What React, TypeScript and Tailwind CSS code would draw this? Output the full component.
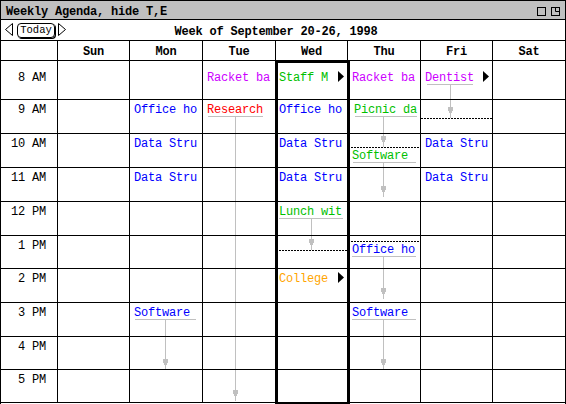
import React from 'react';

const BLUE = 'text-[#0000ff]';
const RED = 'text-[#ff0000]';
const GREEN = 'text-[#00c000]';
const PURPLE = 'text-[#cc00ff]';
const ORANGE = 'text-[#ffa500]';

const days = ['Sun', 'Mon', 'Tue', 'Wed', 'Thu', 'Fri', 'Sat'];
const hours = ['8 AM', '9 AM', '10 AM', '11 AM', '12 PM', '1 PM', '2 PM', '3 PM', '4 PM', '5 PM'];

// time column + seven days, last one has no right border
const cols = 'grid-cols-[57px_72px_73px_73px_72px_73px_72px_72px]';

const More = () => (
  <svg width="6" height="11" className="shrink-0">
    <polygon points="0,0 6,5.5 0,11" fill="#000" />
  </svg>
);

interface LabelProps {
  text: string;
  color: string;
  more?: boolean;
  indent?: string;
  className?: string;
}

const Label: React.FC<LabelProps> = ({ text, color, more, indent = 'pl-[4px]', className = '' }) => (
  <div className={`flex h-[13px] items-start justify-between pr-[3px] leading-[14px] whitespace-pre ${indent} ${className}`}>
    <span className={color}>{text}</span>
    {more && <More />}
  </div>
);

// grey underline with the duration line running down from it
const Span = ({ box, line }: { box: string; line: string }) => (
  <div className={`relative h-px bg-[#c0c0c0] ${box}`}>
    <div className={`absolute top-px -z-10 w-px bg-[#c0c0c0] ${line}`}>
      <svg width="5" height="8" className="absolute bottom-[3px] left-[-2px]" shapeRendering="crispEdges">
        <path d="M0 0h5v4h-1v2h-1v2h-1v-2h-1v-2h-1z" fill="#c0c0c0" />
      </svg>
    </div>
  </div>
);

const Dots = ({ className }: { className: string }) => (
  <div className={`h-px bg-[linear-gradient(90deg,#000_2px,transparent_2px)] bg-[length:3px_1px] ${className}`} />
);

const WED = 'pl-[3px]';

const cells: Record<string, React.ReactNode> = {
  '0-3': <Label text="Racket ba" color={PURPLE} />,
  '0-4': <Label text="Staff M" color={GREEN} indent={WED} more />,
  '0-5': <Label text="Racket ba" color={PURPLE} />,
  '0-6': (
    <>
      <Label text="Dentist" color={PURPLE} more />
      <Span box="ml-[6px] w-[46px]" line="left-[23px] h-[33px]" />
    </>
  ),
  '1-2': <Label text="Office ho" color={BLUE} />,
  '1-3': (
    <>
      <Label text="Research" color={RED} />
      <Span box="ml-[5px] w-[55px]" line="left-[27px] h-[284px]" />
    </>
  ),
  '1-4': <Label text="Office ho" color={BLUE} indent={WED} />,
  '1-5': (
    <>
      <Label text="Picnic da" color={GREEN} indent="pl-[6px]" />
      <Span box="ml-[7px] w-[62px]" line="left-[28px] h-[30px]" />
    </>
  ),
  '1-6': <Dots className="mt-[15px]" />,
  '2-2': <Label text="Data Stru" color={BLUE} />,
  '2-4': <Label text="Data Stru" color={BLUE} indent={WED} />,
  '2-5': (
    <>
      <Dots className="mt-[10px]" />
      <Label text="Software" color={GREEN} className="mt-[1px]" />
      <Span box="ml-[5px] w-[63px]" line="left-[30px] h-[34px]" />
    </>
  ),
  '2-6': <Label text="Data Stru" color={BLUE} />,
  '3-2': <Label text="Data Stru" color={BLUE} />,
  '3-4': <Label text="Data Stru" color={BLUE} indent={WED} />,
  '3-6': <Label text="Data Stru" color={BLUE} />,
  '4-4': (
    <>
      <Label text="Lunch wit" color={GREEN} indent={WED} />
      <Span box="ml-[3px] w-[64px]" line="left-[32px] h-[31px]" />
    </>
  ),
  '5-4': <Dots className="mt-[11px]" />,
  '5-5': (
    <>
      <Dots className="mt-[2px]" />
      <Label text="Office ho" color={BLUE} className="mt-[1px]" />
      <Span box="ml-[4px] w-[64px]" line="left-[31px] h-[42px]" />
    </>
  ),
  '6-4': <Label text="College" color={ORANGE} indent={WED} more />,
  '7-2': (
    <>
      <Label text="Software" color={BLUE} />
      <Span box="ml-[5px] w-[61px]" line="left-[30px] h-[50px]" />
    </>
  ),
  '7-5': (
    <>
      <Label text="Software" color={BLUE} />
      <Span box="ml-[4px] w-[64px]" line="left-[31px] h-[50px]" />
    </>
  ),
};

const App: React.FC = () => {
  return (
    <div className="relative h-[404px] w-[566px] overflow-hidden border-x border-t border-black bg-white font-['Liberation_Mono',monospace] text-[12px] tracking-[-0.2px] text-black">
      {/* title bar */}
      <div className="flex h-[19px] items-start justify-between border-b border-black bg-[#c0c0c0] pl-[5px] pr-[5px]">
        <span className="pt-[4px] font-bold leading-[14px] whitespace-pre">Weekly Agenda, hide T,E</span>
        <div className="flex gap-[5px] pt-[6px]">
          <svg width="9" height="9">
            <rect x="0.5" y="0.5" width="8" height="8" fill="none" stroke="#000" />
          </svg>
          <svg width="9" height="9">
            <rect x="0.5" y="0.5" width="8" height="8" fill="none" stroke="#000" />
            <path d="M4.5 0.5V4.5H8.5" fill="none" stroke="#000" />
          </svg>
        </div>
      </div>

      {/* navigation */}
      <div className="flex h-[21px] items-start border-b border-black">
        <div className="flex w-[66px] items-start pl-[4px] pt-[3px]">
          <svg width="8" height="13">
            <path d="M7.5 0.5L0.5 6.5L7.5 12.5Z" fill="none" stroke="#000" />
          </svg>
          <div className="ml-[4px] flex h-[15px] w-[38px] items-center justify-center rounded-[4px] border border-black text-[10.5px] leading-[13px] tracking-normal shadow-[1px_1px_0_0_#000]">
            Today
          </div>
          <svg width="8" height="13" className="ml-[3px]">
            <path d="M0.5 0.5L7.5 6.5L0.5 12.5Z" fill="none" stroke="#000" />
          </svg>
        </div>
        <div className="flex-1 pr-[80px] pt-[5px] text-center font-bold leading-[14px] whitespace-pre">
          Week of September 20-26, 1998
        </div>
      </div>

      {/* day header */}
      <div className={`grid h-[20px] border-b border-black ${cols}`}>
        <div className="border-r border-black" />
        {days.map((d, i) => (
          <div
            key={d}
            className={`pt-[4px] text-center font-bold leading-[14px] ${i < 6 ? 'border-r border-black' : ''}`}
          >
            {d}
          </div>
        ))}
      </div>

      {/* hour grid */}
      <div className={`isolate grid bg-white ${cols} grid-rows-[39px_34px_34px_34px_34px_33px_34px_34px_33px_33px]`}>
        {hours.map((h, r) => (
          <React.Fragment key={h}>
            <div className={`border-b border-r border-black pr-[11px] text-right leading-[14px] ${r === 0 ? 'pt-[10px]' : 'pt-[3px]'}`}>
              {h}
            </div>
            {days.map((d, c) => (
              <div
                key={d}
                className={`border-b border-black ${c < 6 ? 'border-r' : ''} ${r === 0 ? 'pt-[10px]' : 'pt-[3px]'}`}
              >
                {cells[`${r}-${c + 1}`]}
              </div>
            ))}
          </React.Fragment>
        ))}
      </div>

      {/* selected day outline */}
      <div className="pointer-events-none absolute left-[274px] top-[59px] h-[345px] w-[75px] border-[3px] border-black" />
    </div>
  );
};

export default App;
